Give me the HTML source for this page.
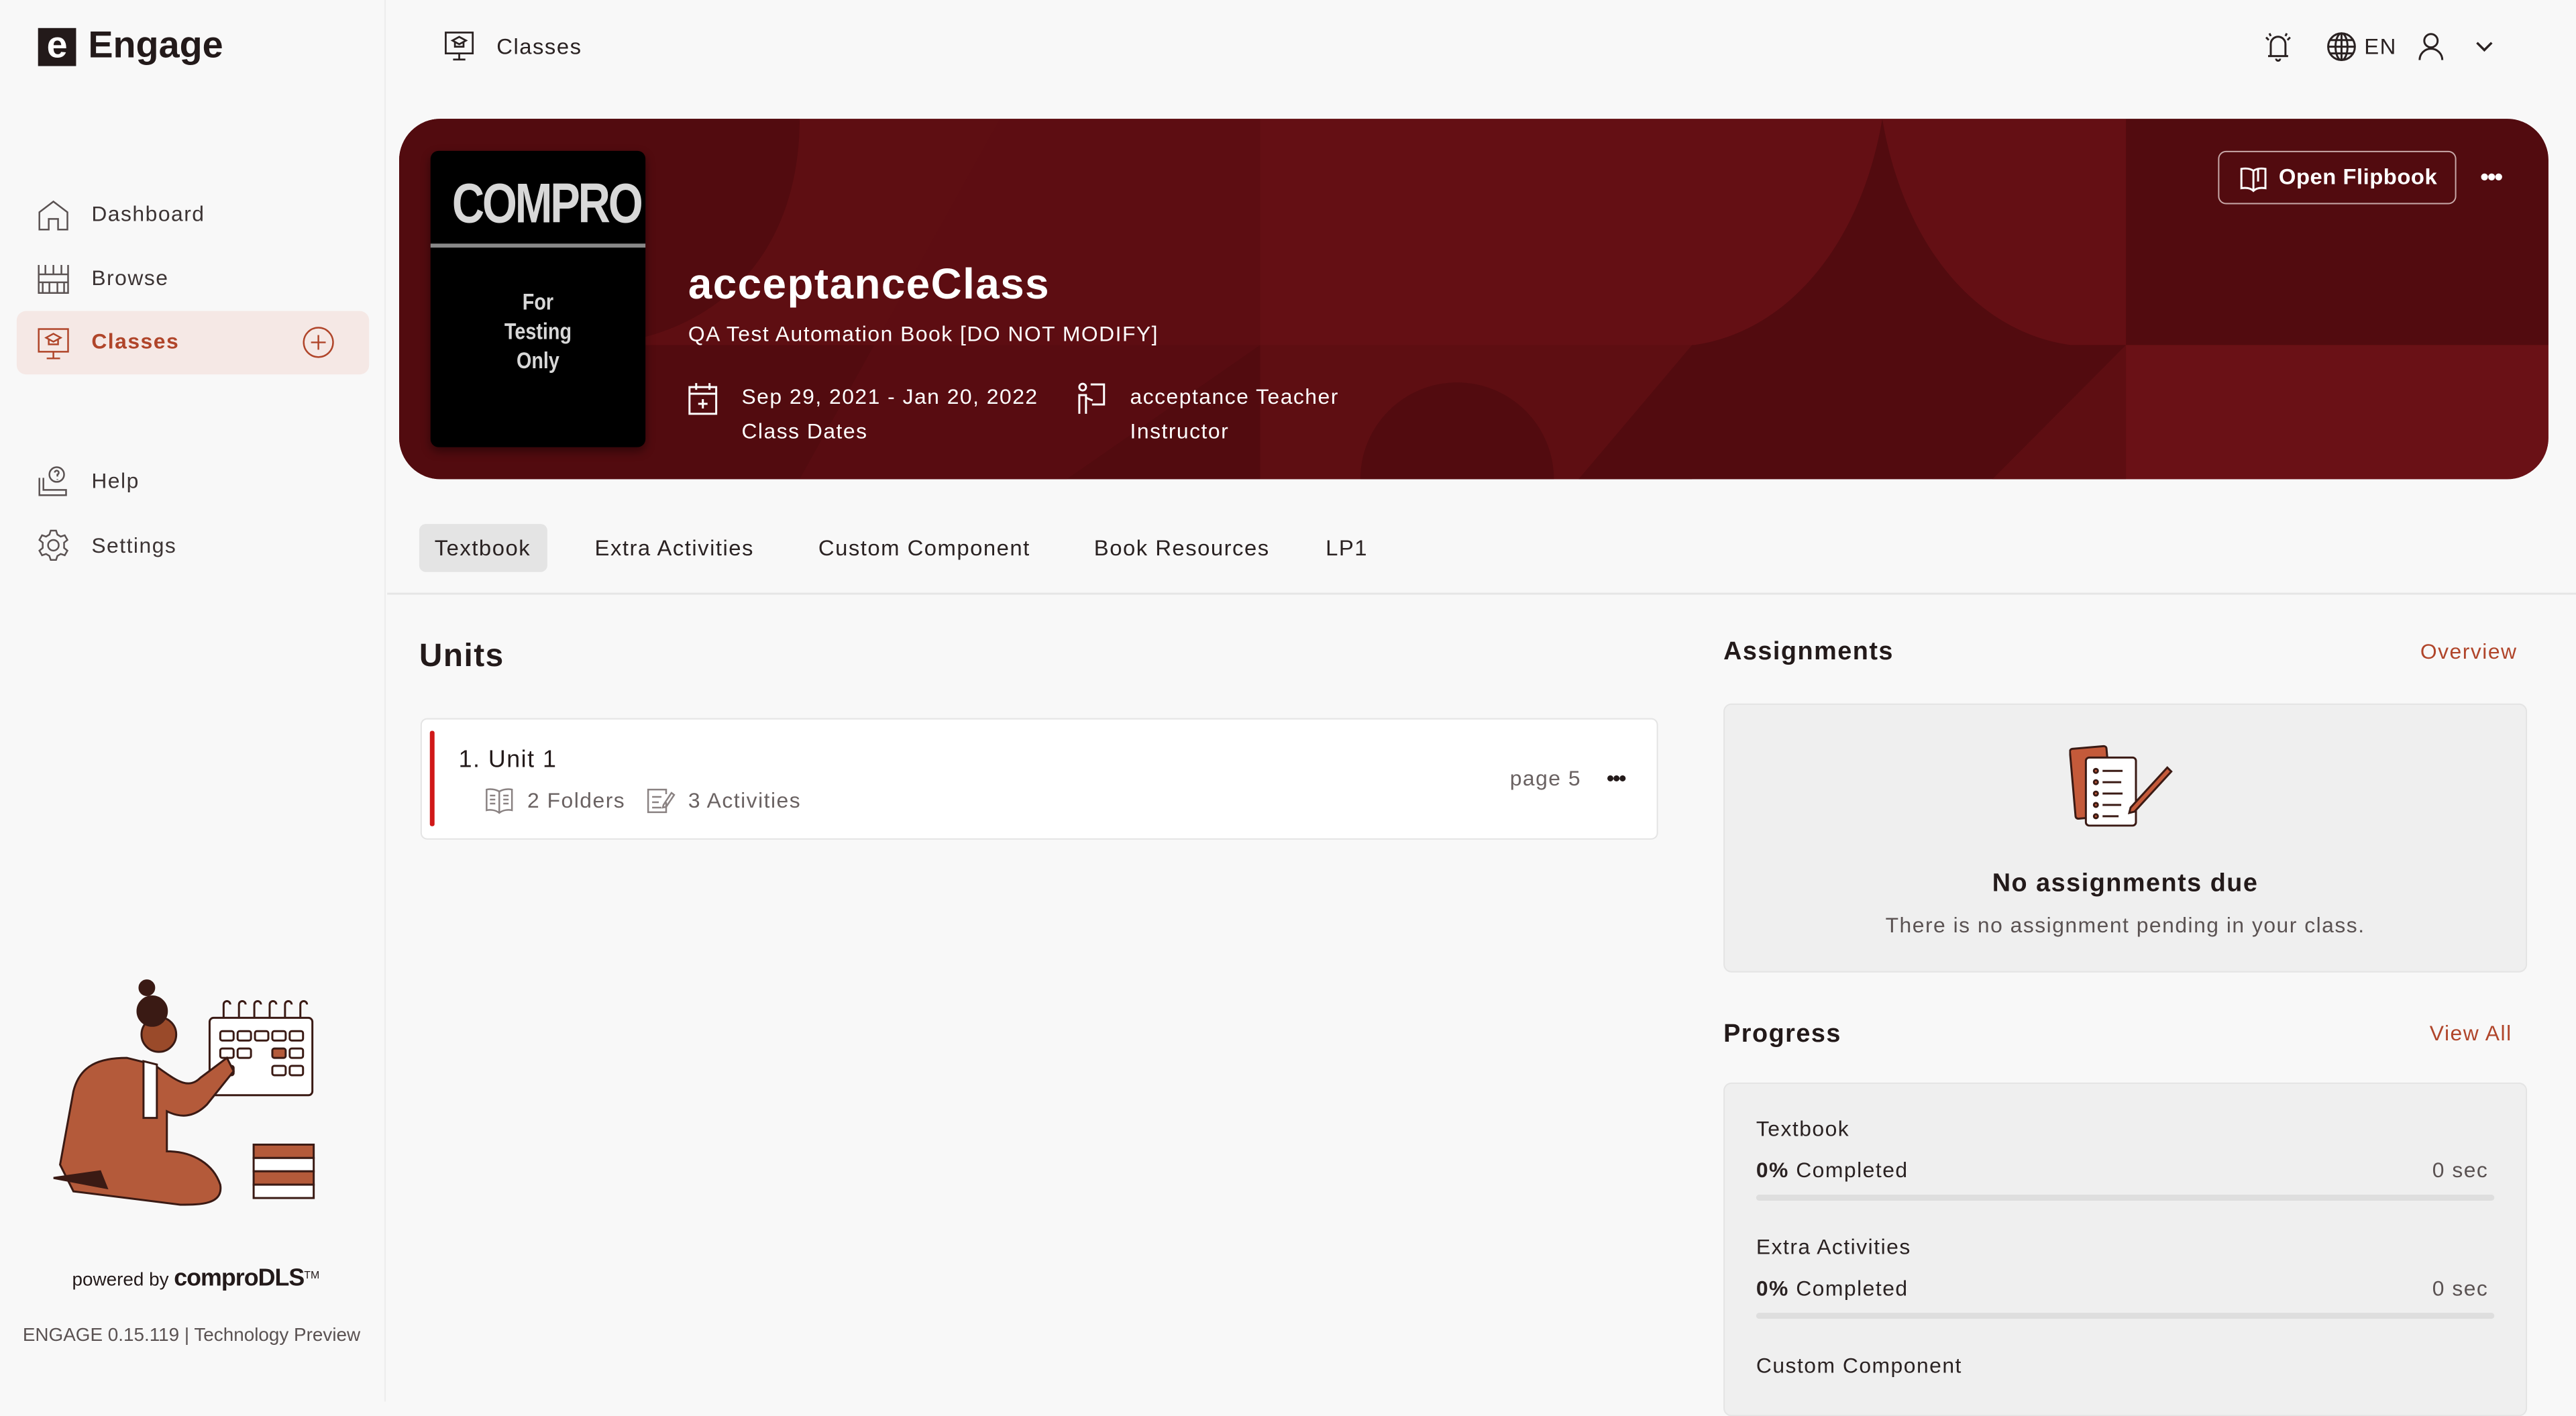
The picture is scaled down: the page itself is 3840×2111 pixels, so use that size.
<!DOCTYPE html>
<html><head><meta charset="utf-8"><style>
*{margin:0;padding:0;box-sizing:border-box}
body{width:3840px;height:2056px;background:#f8f8f8;font-family:"Liberation Sans",sans-serif;color:#2a2222;position:relative;overflow:hidden;letter-spacing:1.5px}
#w{position:absolute;left:0;top:0;width:3860px;height:2080px;transform:scale(0.995);transform-origin:0 0}
.a{position:absolute;white-space:nowrap}
.side{position:absolute;left:0;top:0;width:578px;height:2100px;background:#f8f8f8;border-right:2px solid #ececec}
.nav{font-size:32px;color:#3c3434}
.tab{font-size:33px;color:#2a2222}
.prog{font-size:32px;color:#2a2222}
.bar{position:absolute;height:9px;background:#dedede;border-radius:5px}
</style></head><body><div id="w">
<div class="side"></div>
<div class="a" style="left:57px;top:42px;width:57px;height:57px;background:#231a1a;color:#fff;font-weight:bold;font-size:56px;line-height:50px;text-align:center;letter-spacing:0">e</div>
<div class="a" style="left:132px;top:34px;font-size:56px;font-weight:bold;color:#231a1a;letter-spacing:0">Engage</div>
<svg class="a" style="left:55px;top:298px" width="50" height="50" viewBox="0 0 50 50" fill="none" stroke="#5a5252" stroke-width="2.5"><path d="M4 46V20L25 4l21 16v26H32V30H18v16z"/></svg>
<div class="a nav" style="left:137px;top:302px">Dashboard</div>
<svg class="a" style="left:55px;top:393px" width="50" height="50" viewBox="0 0 50 50" fill="none" stroke="#5a5252" stroke-width="2.5"><path d="M3 4v42h44V4M3 18h44M3 30h44M13 4v14M25 4v14M37 4v14M9 30v16M19 30v16M31 30v16M41 30v16"/></svg>
<div class="a nav" style="left:137px;top:398px">Browse</div>
<div class="a" style="left:25px;top:466px;width:528px;height:95px;background:#f5e8e5;border-radius:14px"></div>
<svg class="a" style="left:55px;top:490px" width="50" height="50" viewBox="0 0 50 50" fill="none" stroke="#b0452a" stroke-width="2.5"><rect x="3" y="3" width="44" height="34"/><path d="M25 37v10M15 47h20M14 16l11-6 11 6-11 6zM18 19v7h14v-7"/></svg>
<div class="a nav" style="left:137px;top:493px;color:#b0452a;font-weight:bold">Classes</div>
<svg class="a" style="left:452px;top:488px" width="50" height="50" viewBox="0 0 50 50" fill="none" stroke="#b0452a" stroke-width="2.5"><circle cx="25" cy="25" r="22"/><path d="M25 14v22M14 25h22"/></svg>
<svg class="a" style="left:55px;top:696px" width="50" height="50" viewBox="0 0 50 50" fill="none" stroke="#5a5252" stroke-width="2.5"><path d="M4 20v26h40v-8H10V20"/><circle cx="30" cy="15" r="11"/><path d="M27 12a3 3 0 1 1 4 3v3M31 22v1"/></svg>
<div class="a nav" style="left:137px;top:702px">Help</div>
<svg class="a" style="left:55px;top:792px" width="50" height="50" viewBox="0 0 50 50" fill="none" stroke="#5a5252" stroke-width="2.5"><circle cx="25" cy="25" r="8"/><path d="M21 3h8l2 6 5 3 6-2 4 7-5 4v8l5 4-4 7-6-2-5 3-2 6h-8l-2-6-5-3-6 2-4-7 5-4v-8l-5-4 4-7 6 2 5-3z"/></svg>
<div class="a nav" style="left:137px;top:799px">Settings</div>
<svg class="a" style="left:80px;top:1465px" width="420" height="360" viewBox="0 0 420 360">
<g stroke="#3a1a14" stroke-width="3">
<rect x="234" y="60" width="154" height="116" rx="6" fill="#fff"/>
<g fill="none"><path d="M255 60v-20a5 5 0 0 1 10 0M278 60v-20a5 5 0 0 1 10 0M301 60v-20a5 5 0 0 1 10 0M324 60v-20a5 5 0 0 1 10 0M347 60v-20a5 5 0 0 1 10 0M370 60v-20a5 5 0 0 1 10 0"/>
<rect x="250" y="80" width="20" height="14" rx="3"/><rect x="276" y="80" width="20" height="14" rx="3"/><rect x="302" y="80" width="20" height="14" rx="3"/><rect x="328" y="80" width="20" height="14" rx="3"/><rect x="354" y="80" width="20" height="14" rx="3"/>
<rect x="250" y="106" width="20" height="14" rx="3"/><rect x="276" y="106" width="20" height="14" rx="3"/><rect x="354" y="106" width="20" height="14" rx="3"/>
<rect x="250" y="132" width="20" height="14" rx="3"/><rect x="328" y="132" width="20" height="14" rx="3"/><rect x="354" y="132" width="20" height="14" rx="3"/></g>
<rect x="328" y="106" width="20" height="14" rx="3" fill="#b45a3a"/>
<path d="M30 170c10-40 40-50 80-50l40 10c30 20 50 40 70 20l40-30 10 20-40 50c-20 20-40 20-60 10v60c40 0 70 20 80 50 5 30-30 30-60 30l-160-20-20-40z" fill="#b45a3a"/>
<path d="M135 125l20 5v80h-20z" fill="#fff"/>
<circle cx="158" cy="85" r="26" fill="#9a4a2a"/>
<circle cx="148" cy="50" r="22" fill="#3a1a14"/><circle cx="140" cy="15" r="11" fill="#3a1a14"/>
<path d="M0 300l70-10 10 25z" fill="#3a1a14"/>
<rect x="300" y="250" width="90" height="20" fill="#b45a3a"/><rect x="300" y="270" width="90" height="20" fill="#fff"/><rect x="300" y="290" width="90" height="20" fill="#b45a3a"/><rect x="300" y="310" width="90" height="20" fill="#fff"/>
</g></svg>
<div class="a" style="left:108px;top:1893px;font-size:28px;color:#231a1a;letter-spacing:0">powered by <span style="font-size:36px;font-weight:bold;letter-spacing:-1px">comproDLS</span><sup style="font-size:16px">TM</sup></div>
<div class="a" style="left:34px;top:1984px;font-size:28px;color:#5a5252;letter-spacing:0">ENGAGE 0.15.119 | Technology Preview</div>

<svg class="a" style="left:665px;top:46px" width="46" height="46" viewBox="0 0 50 50" fill="none" stroke="#2a2222" stroke-width="3"><rect x="3" y="3" width="44" height="34"/><path d="M25 37v10M15 47h20M14 16l11-6 11 6-11 6zM18 19v7h14v-7"/></svg>
<div class="a" style="left:744px;top:51px;font-size:33px">Classes</div>
<svg class="a" style="left:3390px;top:46px" width="46" height="48" viewBox="0 0 46 48" fill="none" stroke="#2a2222" stroke-width="3"><path d="M12 38V20a11 11 0 0 1 22 0v18zM8 38h30M20 42a3 3 0 0 0 6 0M5 10l4 4M41 10l-4 4M10 4l2 4M36 4l-2 4"/></svg>
<svg class="a" style="left:3484px;top:46px" width="48" height="48" viewBox="0 0 48 48" fill="none" stroke="#2a2222" stroke-width="3"><circle cx="24" cy="24" r="20"/><ellipse cx="24" cy="24" rx="9" ry="20"/><path d="M4 24h40M7 14h34M7 34h34M24 4v40"/></svg>
<div class="a" style="left:3542px;top:51px;font-size:33px">EN</div>
<svg class="a" style="left:3620px;top:46px" width="44" height="48" viewBox="0 0 44 48" fill="none" stroke="#2a2222" stroke-width="3"><circle cx="22" cy="15" r="10"/><path d="M5 44a17 17 0 0 1 34 0"/></svg>
<svg class="a" style="left:3708px;top:60px" width="28" height="20" viewBox="0 0 28 20" fill="none" stroke="#2a2222" stroke-width="3.5"><path d="M3 4l11 11 11-11"/></svg>

<svg class="a" style="left:598px;top:178px" width="3220" height="540" viewBox="0 0 3220 540">
<defs><clipPath id="c"><rect width="3220" height="540" rx="62"/></clipPath></defs>
<g clip-path="url(#c)">
<rect width="3220" height="540" fill="#6a1116"/>
<rect x="0" y="0" width="1290" height="339" fill="#5e0e12"/>
<path d="M0 0h600c0 180-100 320-300 339H0z" fill="#520b0f"/>
<rect x="0" y="339" width="1290" height="201" fill="#520b0f"/>
<path d="M600 540L900 0h390v339L1000 540z" fill="#5e0e12" opacity=".6"/>
<rect x="1290" y="0" width="1297" height="339" fill="#640f14"/>
<rect x="1290" y="339" width="647" height="201" fill="#5e0e12"/>
<path d="M1440 540a140 140 0 0 1 290 0z" fill="#520b0f"/>
<path d="M1937 339h650v201h-820z" fill="#520b0f"/>
<path d="M2050 339h-110c140-20 250-150 282-339 32 189 140 319 282 339z" fill="#520b0f"/>
<rect x="2587" y="0" width="633" height="339" fill="#520b0f"/>
<rect x="2587" y="339" width="633" height="201" fill="#6a1116"/>
<path d="M2587 339l-200 201h200z" fill="#5e0e12"/>
</g></svg>
<div class="a" style="left:645px;top:226px;width:322px;height:444px;background:#000;border-radius:12px;box-shadow:0 6px 14px rgba(0,0,0,.4);text-align:center;color:#d8d8d8;font-weight:bold;letter-spacing:0">
<div style="font-size:84px;margin-top:30px;letter-spacing:-4px;transform:scaleX(.8)">COMPRO</div>
<div style="height:6px;background:#888;margin-top:12px"></div>
<div style="font-size:34px;line-height:44px;margin-top:60px;transform:scaleX(.85)">For<br>Testing<br>Only</div></div>
<div class="a" style="left:1031px;top:388px;font-size:64px;font-weight:bold;color:#fff;letter-spacing:1.5px">acceptanceClass</div>
<div class="a" style="left:1031px;top:482px;font-size:32px;color:#fff">QA Test Automation Book [DO NOT MODIFY]</div>
<svg class="a" style="left:1030px;top:572px" width="46" height="50" viewBox="0 0 46 50" fill="none" stroke="#fff" stroke-width="3"><rect x="3" y="8" width="40" height="40"/><path d="M3 18h40M13 2v10M33 2v10M23 26v14M16 33h14"/></svg>
<div class="a" style="left:1111px;top:576px;font-size:32px;color:#fff">Sep 29, 2021 - Jan 20, 2022</div>
<div class="a" style="left:1111px;top:628px;font-size:32px;color:#fff">Class Dates</div>
<svg class="a" style="left:1612px;top:572px" width="46" height="50" viewBox="0 0 46 50" fill="none" stroke="#fff" stroke-width="3"><circle cx="10" cy="8" r="5"/><path d="M5 48V20h10v28M22 4h20v30H24M15 24l10 4"/></svg>
<div class="a" style="left:1693px;top:576px;font-size:32px;color:#fff">acceptance Teacher</div>
<div class="a" style="left:1693px;top:628px;font-size:32px;color:#fff">Instructor</div>
<div class="a" style="left:3323px;top:226px;width:357px;height:80px;border:2px solid #c8a8a8;border-radius:12px"></div>
<svg class="a" style="left:3355px;top:248px" width="42" height="40" viewBox="0 0 42 40" fill="none" stroke="#fff" stroke-width="3"><path d="M21 8v30M21 8c-5-4-12-4-18-3v29c6-1 13-1 18 4 5-5 12-5 18-4V5c-6-1-13-1-18 3zM28 4v20"/></svg>
<div class="a" style="left:3414px;top:246px;font-size:33px;color:#fff;font-weight:bold;letter-spacing:0.5px">Open Flipbook</div>
<div class="a" style="left:3716px;top:244px;font-size:36px;color:#fff;font-weight:bold;letter-spacing:-2px">•••</div>

<div class="a" style="left:628px;top:785px;width:192px;height:72px;background:#e4e4e4;border-radius:10px"></div>
<div class="a tab" style="left:651px;top:802px">Textbook</div>
<div class="a tab" style="left:891px;top:802px">Extra Activities</div>
<div class="a tab" style="left:1226px;top:802px">Custom Component</div>
<div class="a tab" style="left:1639px;top:802px">Book Resources</div>
<div class="a tab" style="left:1986px;top:802px">LP1</div>
<div class="a" style="left:580px;top:888px;width:3300px;height:3px;background:#e6e6e6"></div>

<div class="a" style="left:628px;top:955px;font-size:48px;font-weight:bold;color:#231a1a">Units</div>
<div class="a" style="left:630px;top:1076px;width:1854px;height:182px;background:#fff;border:2px solid #e4e4e4;border-radius:10px"></div>
<div class="a" style="left:644px;top:1095px;width:7px;height:143px;background:#d01818;border-radius:3px"></div>
<div class="a" style="left:687px;top:1116px;font-size:36px;color:#231a1a">1. Unit 1</div>
<svg class="a" style="left:726px;top:1180px" width="44" height="40" viewBox="0 0 44 40" fill="none" stroke="#8a8282" stroke-width="2.5"><path d="M22 6v32M22 6C16 2 8 2 3 3v31c5-1 13-1 19 4 6-5 14-5 19-4V3c-5-1-13-1-19 3zM8 12h8M8 18h8M8 24h8M28 12h8M28 18h8M28 24h8"/></svg>
<div class="a" style="left:790px;top:1181px;font-size:32px;color:#6a6262">2 Folders</div>
<svg class="a" style="left:968px;top:1180px" width="44" height="40" viewBox="0 0 44 40" fill="none" stroke="#8a8282" stroke-width="2.5"><path d="M30 10V3H3v34h27V22M9 14h14M9 22h10M9 30h14M26 26l12-18 4 3-12 18-5 1z"/></svg>
<div class="a" style="left:1031px;top:1181px;font-size:32px;color:#6a6262">3 Activities</div>
<div class="a" style="left:2262px;top:1148px;font-size:32px;color:#6a6262">page 5</div>
<div class="a" style="left:2407px;top:1148px;font-size:32px;color:#231a1a;font-weight:bold;letter-spacing:-2px">•••</div>

<div class="a" style="left:2582px;top:955px;font-size:38px;font-weight:bold;color:#231a1a">Assignments</div>
<div class="a" style="left:3626px;top:958px;font-size:32px;color:#b0452a">Overview</div>
<div class="a" style="left:2582px;top:1054px;width:1204px;height:403px;background:#efefef;border:2px solid #e4e4e4;border-radius:12px"></div>
<svg class="a" style="left:3100px;top:1110px" width="160" height="130" viewBox="0 0 160 130">
<g stroke="#3a1a14" stroke-width="3"><rect x="5" y="10" width="55" height="105" rx="4" fill="#c45a3a" transform="rotate(-5 30 60)"/><rect x="25" y="25" width="75" height="102" rx="5" fill="#fff"/>
<g fill="#c45a3a"><circle cx="40" cy="45" r="3"/><circle cx="40" cy="62" r="3"/><circle cx="40" cy="79" r="3"/><circle cx="40" cy="96" r="3"/><circle cx="40" cy="113" r="3"/></g>
<path d="M50 45h30M50 62h28M50 79h30M50 96h28M50 113h24"/><path d="M92 100l55-60 6 6-55 60-8 2z" fill="#c45a3a"/></g></svg>
<div class="a" style="left:2582px;width:1204px;text-align:center;top:1302px;font-size:38px;font-weight:bold;color:#231a1a">No assignments due</div>
<div class="a" style="left:2582px;width:1204px;text-align:center;top:1368px;font-size:32px;color:#5a5252">There is no assignment pending in your class.</div>

<div class="a" style="left:2582px;top:1528px;font-size:38px;font-weight:bold;color:#231a1a">Progress</div>
<div class="a" style="left:3640px;top:1530px;font-size:32px;color:#b0452a">View All</div>
<div class="a" style="left:2582px;top:1622px;width:1204px;height:500px;background:#efefef;border:2px solid #e4e4e4;border-radius:12px"></div>
<div class="a prog" style="left:2631px;top:1673px">Textbook</div>
<div class="a prog" style="left:2631px;top:1735px"><b>0%</b> Completed</div>
<div class="a prog" style="left:3644px;top:1735px;color:#5a5252">0 sec</div>
<div class="bar" style="left:2631px;top:1790px;width:1106px"></div>
<div class="a prog" style="left:2631px;top:1850px">Extra Activities</div>
<div class="a prog" style="left:2631px;top:1912px"><b>0%</b> Completed</div>
<div class="a prog" style="left:3644px;top:1912px;color:#5a5252">0 sec</div>
<div class="bar" style="left:2631px;top:1967px;width:1106px"></div>
<div class="a prog" style="left:2631px;top:2028px">Custom Component</div>
</div></body></html>
